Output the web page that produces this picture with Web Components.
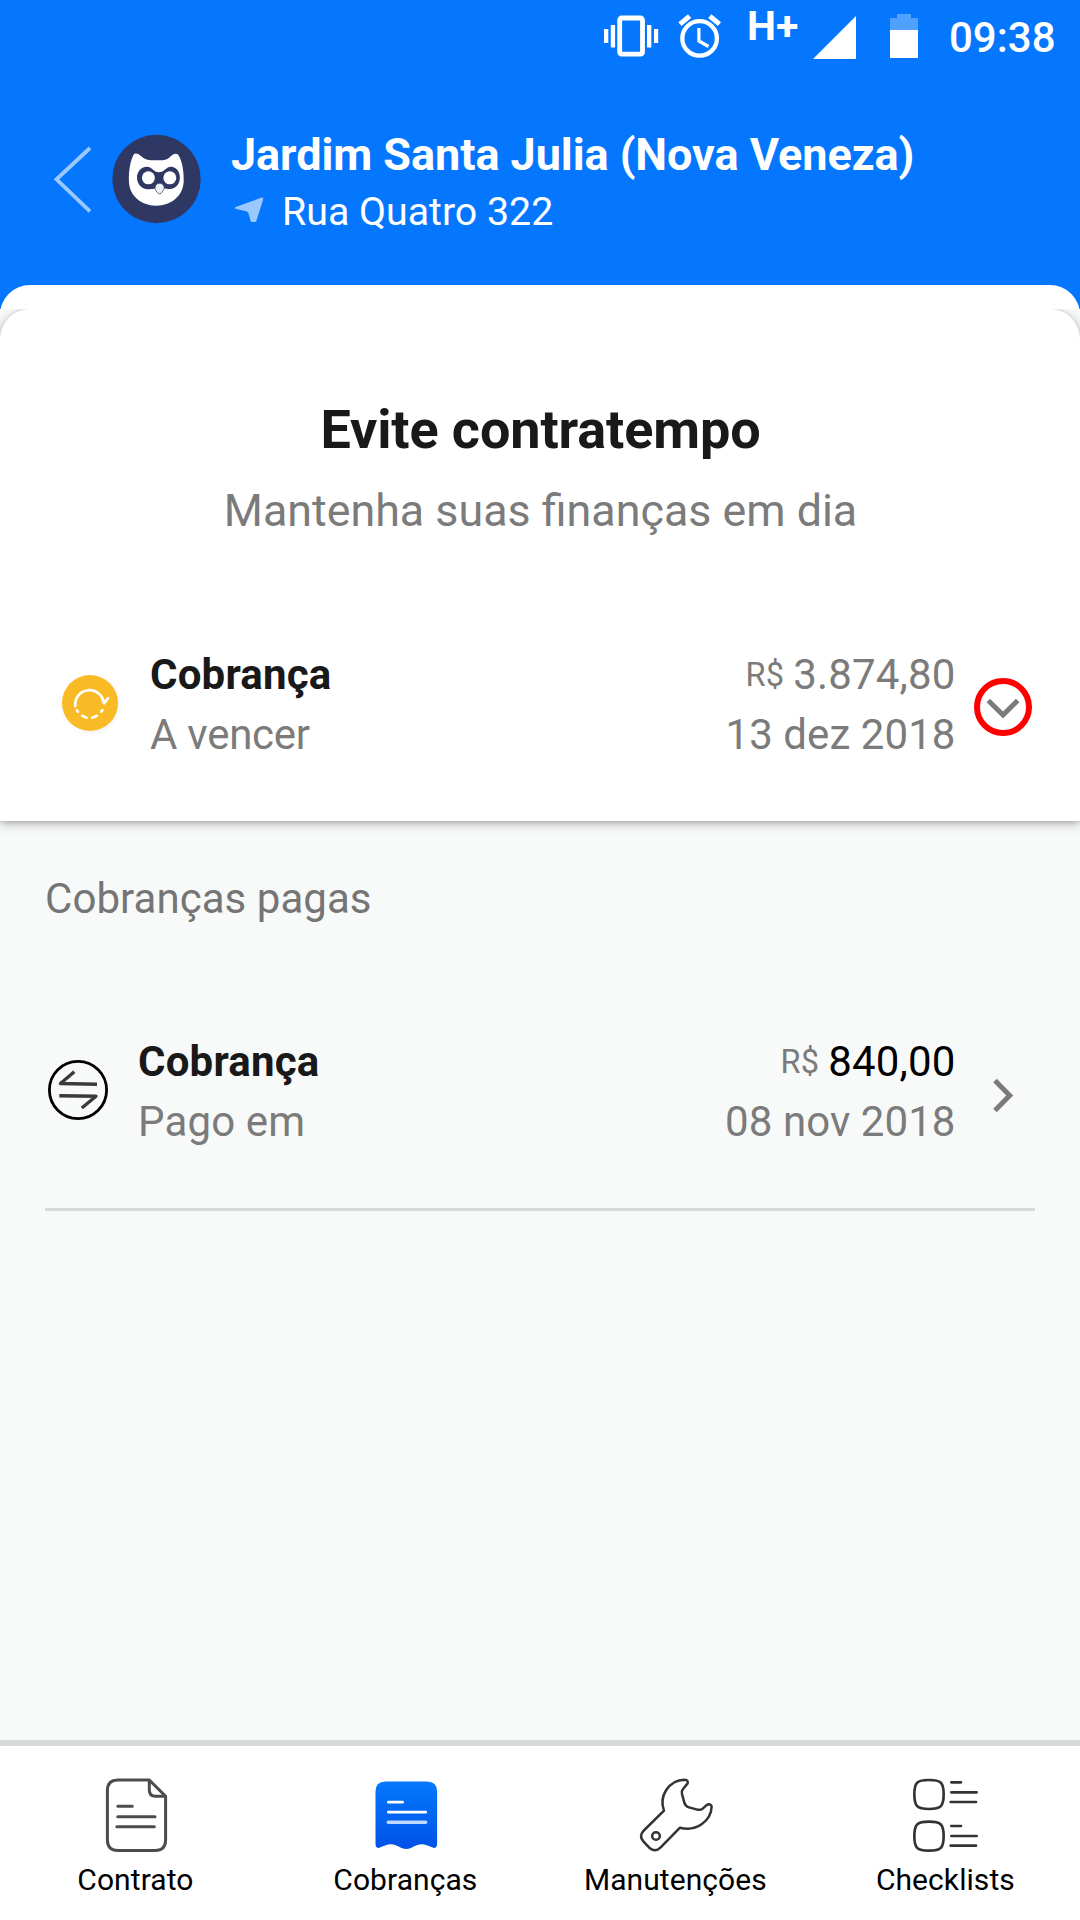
<!DOCTYPE html>
<html lang="pt-BR">
<head>
<meta charset="utf-8">
<title>Cobranças</title>
<style>
html,body{margin:0;padding:0}
body{width:1080px;height:1920px;overflow:hidden;font-family:Roboto,sans-serif;background:#f8faf9}
</style>
</head>
<body>
<billing-app></billing-app>
<script>
const define = (name, html) => customElements.define(name, class extends HTMLElement {
  constructor() {
    super();
    const t = document.createElement('template');
    t.innerHTML = html;
    this.attachShadow({mode: 'open'}).append(t.content.cloneNode(true));
  }
});

define('status-bar', `
<style>
:host{display:flex;height:72px;padding-left:600px;align-items:flex-start;color:#fff}
svg{display:block;flex:none}
.net{width:55px;margin-top:2px;font:bold 41px/48px Roboto,sans-serif;white-space:nowrap}
.time{margin:13px 0 0 1px;font:500 42px/49px Roboto,sans-serif}
</style>
<svg width="62" height="72" viewBox="600 0 62 72" fill="#fff"><rect x="619.7" y="18" width="22.8" height="36.2" rx="2" fill="none" stroke="#fff" stroke-width="4.8"/><path d="M610.8 25h4.3v22.6h-4.3zM604 29h4.3v14H604zM647 25h4.3v22.6H647zM654 29h4.2v14H654z"/></svg>
<svg width="85" height="72" viewBox="662 0 85 72" fill="none" stroke="#fff"><circle cx="699.6" cy="38.4" r="17.3" stroke-width="4.3"/><path d="M698.9 28v13l9.600 5.500" stroke-width="3.200"/><path d="M680 24.200l9.600-8M709.800 16.200l9.600 8" stroke-width="5"/></svg>
<div class="net">H+</div>
<svg width="60" height="72" viewBox="802 0 60 72"><path d="M813 59L856 16V59z" fill="#fff"/></svg>
<svg width="86" height="72" viewBox="862 0 86 72" fill="#fff"><path d="M890 18h7v-4h14v4h7v12h-28z" opacity=".3"/><path d="M890 30h28v28h-28z"/></svg>
<div class="time">09:38</div>`);

define('property-header', `
<style>
:host{display:flex;flex-direction:column;height:309px;background:#0577ff;color:#fff;overflow:hidden}
.row{display:flex;margin-top:56px;height:107px}
svg{display:block;flex:none}
h1{margin:0 0 7px;font:bold 45px/53px Roboto,sans-serif;letter-spacing:-.05px;white-space:nowrap}
.addr{display:flex;font-size:39.300px;line-height:47px}
.addr span{padding-top:1px}
.cap{margin-top:50px;height:60px;flex:none;border-radius:30px 30px 0 0;background:#fff}
</style>
<status-bar></status-bar>
<div class="row">
<svg width="104" height="107" viewBox="0 128 104 107"><path d="M90 148L56.500 179.300L90 211.300" fill="none" stroke="#9bc9ff" stroke-width="3.800"/></svg>
<svg width="127" height="107" viewBox="104 128 127 107">
<circle cx="156.500" cy="179" r="44.200" fill="#2e3862"/>
<path d="M134 154Q137 152.500 141 156Q146 160.300 151 160.300H162Q167 160.300 171 156Q175 152.500 178 154.500C182 160 184 171 183.700 181C183.500 195 172 205.700 156.200 205.700C140.500 205.700 129 195 128.900 181C128.600 170 130.500 160 134 154Z" fill="#fff"/>
<path d="M147 166.800C152 166.800 153.500 172.300 159 172.300C164.500 172.300 166 166.800 171 166.800C176.500 166.800 179.900 172 179.900 177.500C179.900 184 175.500 189 170 189C165 189 163 188 159 188C155 188 153 189.300 148 189.300C141.500 189.300 137 184 137 177.500C137 171.500 141.500 166.800 147 166.800Z" fill="#2e3862"/>
<circle cx="148.400" cy="177.800" r="6.500" fill="#fff"/><circle cx="169.800" cy="177.800" r="6.500" fill="#fff"/>
<path d="M155 188.500C155 185 157 183.300 159.600 183.300C162 183.300 164.300 185 164.300 188.500C163 191 161.500 193.800 159.600 193.800C157.500 193.800 156 191 155 188.500Z" fill="#eff0f2" stroke="#2e3862" stroke-width=".7"/>
</svg>
<div><h1>Jardim Santa Julia (Nova Veneza)</h1>
<div class="addr"><svg width="51" height="47" viewBox="231 188 51 47"><path d="M235 207.300L261 197.800H263.200L263 200L256.300 221Q255.900 222 255 222H252Q251 222 250.600 221L248.600 213.500Q248 211.800 246 211.300L235.300 208.700Z" fill="#9bc9ff"/></svg><span>Rua Quatro 322</span></div></div>
</div>
<div class="cap"></div>`);

define('charge-row', `
<style>
:host{display:flex;align-items:center;height:119px;padding:0 45px;color:#7b7b7b;font-size:42px;line-height:59px}
slot{display:block}
.l,.r{display:flex;flex-direction:column;gap:1px;white-space:nowrap}
.l{flex:1}
.r{align-items:flex-end;margin-right:15.500px;letter-spacing:.07px}
.t{font-weight:bold;color:#191919;letter-spacing:.2px}
.s{letter-spacing:var(--state-spacing,0)}
.a{height:59px;color:var(--amount,#7b7b7b)}
.n{letter-spacing:.15px}
.c{font-size:32.500px;line-height:32px;vertical-align:3px;color:#7b7b7b;margin-right:-1.200px}
::slotted(svg){display:block;flex:none}
</style>
<slot name="icon"></slot>
<div class="l"><div class="t"><slot name="title"></slot></div><div class="s"><slot name="state"></slot></div></div>
<div class="r"><div class="a"><span class="c">R$</span> <span class="n"><slot name="amount" style="display:inline"></slot></span></div><div><slot name="date"></slot></div></div>
<slot name="action"></slot>`);

define('due-card', `
<style>
:host{display:block;height:512px;padding-bottom:40px;margin-bottom:-40px;overflow:hidden}
.card{box-sizing:border-box;height:512px;padding-top:89px;background:#fff;border-radius:30px 30px 0 0;box-shadow:0 3px 11px rgba(0,0,0,.26),0 1px 5px rgba(0,0,0,.14);text-align:center}
h2{margin:0 0 23px;padding-left:1px;font:bold 54px/63px Roboto,sans-serif;color:#191919;letter-spacing:-.12px}
p{margin:0 0 108px;padding-left:1px;font-size:44.800px;line-height:53px;color:#7b7b7b}
charge-row{text-align:left;--state-spacing:-.25px}
</style>
<div class="card">
<h2>Evite contratempo</h2>
<p>Mantenha suas finanças em dia</p>
<charge-row>
<svg slot="icon" width="105" height="67" viewBox="45 671 105 67">
<defs><filter id="s" x="-20%" y="-20%" width="140%" height="140%"><feGaussianBlur stdDeviation="2.500"/></filter></defs>
<circle cx="91.500" cy="705" r="27.500" fill="#000" opacity=".06" filter="url(#s)"/>
<circle cx="90" cy="703" r="28" fill="#f8bb26"/>
<g fill="none" stroke="#fff" stroke-width="2.700" stroke-linecap="round" stroke-linejoin="round"><path d="M75.300 706.200A14.300 14.300 0 1 1 103.800 702.800M102.300 698.500L104 703.300L108 698.300"/><path d="M76.900 710.400l1 1.300M82.200 715.800l4.300 1.900M92.300 717.700l4.500-1.900M101.300 711.700l1-1.500"/></g></svg>
<span slot="title">Cobrança</span><span slot="state">A vencer</span><span slot="amount">3.874,80</span><span slot="date">13 dez 2018</span>
<svg slot="action" width="64" height="67" viewBox="971 671 64 67" fill="none"><circle cx="1003" cy="707" r="26" stroke="#f00" stroke-width="6"/><path d="M988.300 700.500L1003 715L1017.700 700.500" stroke="#7b7b7b" stroke-width="5"/></svg>
</charge-row>
</div>`);

define('tab-item', `
<style>
:host{display:flex;flex-direction:column;align-items:center;flex:1;font-size:30px;line-height:35px;color:#000;letter-spacing:.07px}
::slotted(svg){display:block}
span{padding-left:.8px}
</style>
<slot name="icon"></slot><span><slot></slot></span>`);

define('tab-bar', `
<style>
:host{display:flex;box-sizing:border-box;height:180px;border-top:6px solid #d8d9da;background:#fff}
</style>
<tab-item><svg slot="icon" width="270" height="116" viewBox="0 1746 270 116" fill="none" stroke="#4c4c4c" stroke-width="3" stroke-linecap="round" stroke-linejoin="round"><path d="M149.300 1780H118Q107.400 1780 107.400 1790.500V1840Q107.400 1850.500 118 1850.500H155Q165.600 1850.500 165.600 1840V1796.300ZM149.300 1780V1790Q149.300 1796.300 155.500 1796.300H165.600M117.800 1806.300H132.300M117.800 1816.700H155M116.800 1826.700H154.300"/></svg>Contrato</tab-item>
<tab-item><svg slot="icon" width="270" height="116" viewBox="270 1746 270 116"><defs><linearGradient id="g" x2="0" y2="1"><stop stop-color="#0578ff"/><stop offset="1" stop-color="#0052e6"/></linearGradient></defs><path d="M375.500 1791.500Q375.500 1781.500 385.500 1781.500H427Q437.100 1781.500 437.100 1791.500V1843.500Q437.100 1849.500 432 1847.300C427 1845.300 425 1844.300 421.500 1844.300C415.500 1844.300 412 1849 406.300 1849C400.500 1849 397 1844.300 391 1844.300C387.500 1844.300 385.500 1845.300 380.500 1847.300Q375.500 1849.500 375.500 1843.500Z" fill="url(#g)"/><g fill="none" stroke="#fff" stroke-width="2.700" stroke-linecap="round"><path d="M388.300 1802.200H402.700M388.300 1812.200H425.700"/><path d="M388.300 1822.200H425.700" stroke="#bfd8fd" stroke-width="3.400"/></g></svg>Cobranças</tab-item>
<tab-item><svg slot="icon" width="270" height="116" viewBox="540 1746 270 116"><g transform="translate(560 1730) scale(.33333)" fill="none" stroke="#333" stroke-width="7.500" stroke-linejoin="round"><path d="M312 242C296 200 325 150 374 149Q385 150 383 160L369 177Q364 183 366 192L373 218Q376 229 387 232L412 239Q422 241 428 236L439 226Q450 218 455 229C454 272 410 306 360 293L302 352Q286 368 270 355L250 334Q236 319 250 303Z"/><circle cx="288" cy="318" r="11.500"/></g></svg>Manutenções</tab-item>
<tab-item><svg slot="icon" width="270" height="116" viewBox="810 1746 270 116"><g transform="translate(560 1730) scale(.33333)" fill="none" stroke="#333" stroke-width="8" stroke-linecap="round"><path d="M1063 193C1063 158 1071 150 1107 150C1143 150 1151 158 1151 193C1151 229 1143 237 1107 237C1071 237 1063 229 1063 193Z"/><path d="M1063 318C1063 283 1071 275 1107 275C1143 275 1151 283 1151 318C1151 354 1143 362 1107 362C1071 362 1063 354 1063 318Z"/><path d="M1174 157H1203M1174 187H1250M1172 216H1248M1174 288H1203M1174 318H1250M1172 347H1248"/></g></svg>Checklists</tab-item>`);

define('billing-app', `
<style>
:host{display:flex;flex-direction:column;width:1080px;height:1920px;background:#f8faf9}
property-header,due-card{flex:none}
main{flex:1}
h3{margin:53px 45px 109px;font:normal 42px/49px Roboto,sans-serif;color:#757575;letter-spacing:.05px}
.paid{--amount:#000;--state-spacing:.15px}
hr{margin:57px 45px 0;border:0;height:3px;background:#d8d9da}
</style>
<property-header></property-header>
<due-card></due-card>
<main>
<h3>Cobranças pagas</h3>
<charge-row class="paid">
<svg slot="icon" width="93" height="67" viewBox="45 1058 93 67" fill="none"><circle cx="78" cy="1090" r="28.600" stroke="#000" stroke-width="2.800"/><path d="M97 1084.300L60.500 1083.500L74.300 1071.800M59.300 1095.800L96 1096.300L81.800 1108" stroke="#3a3a3a" stroke-width="3.400" stroke-linejoin="round"/></svg>
<span slot="title">Cobrança</span><span slot="state">Pago em</span><span slot="amount">840,00</span><span slot="date">08 nov 2018</span>
<svg slot="action" width="64" height="67" viewBox="971 1058 64 67" fill="none"><path d="M995 1080.500L1009.700 1095.500L995 1110.500" stroke="#7b7b7b" stroke-width="5"/></svg>
</charge-row>
<hr>
</main>
<tab-bar></tab-bar>`);
</script>
</body>
</html>
